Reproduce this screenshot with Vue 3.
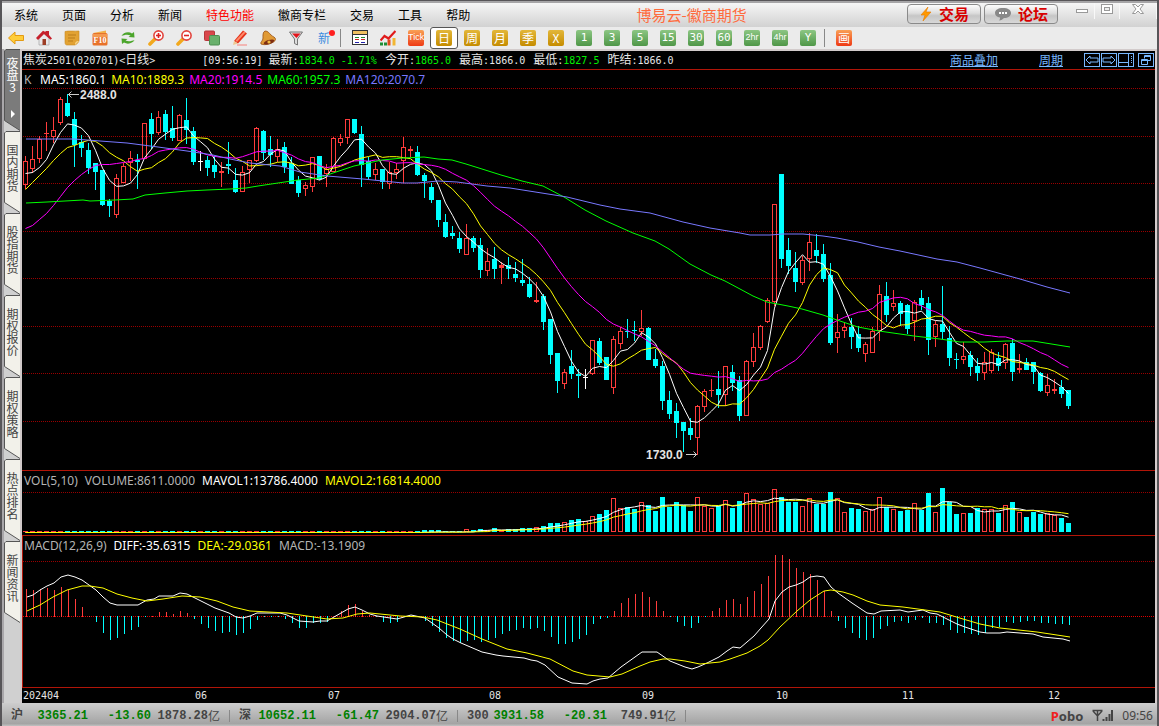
<script setup>
const menu = ['系统', '页面', '分析', '新闻', '特色功能', '徽商专栏', '交易', '工具', '帮助']
const periods = [
  { t: '日', c: 'gold' }, { t: '周', c: 'gold' }, { t: '月', c: 'gold' }, { t: '季', c: 'gold' }, { t: 'X', c: 'gold' },
  { t: '1', c: 'green' }, { t: '3', c: 'green' }, { t: '5', c: 'green' }, { t: '15', c: 'green' }, { t: '30', c: 'green' },
  { t: '60', c: 'green' }, { t: '2hr', c: 'green' }, { t: '4hr', c: 'green' }, { t: 'Y', c: 'green' },
]
const tabs = ['夜盘3', '国内期货', '股指期货', '期权报价', '期权策略', '热点排名', '新闻资讯']
const quotes = [
  { k: '今开', v: '1865.0', up: true }, { k: '最高', v: '1866.0' },
  { k: '最低', v: '1827.5', up: true }, { k: '昨结', v: '1866.0' },
]
const indices = [
  { n: '沪', p: '3365.21', d: '-13.60', a: '1878.28' },
  { n: '深', p: '10652.11', d: '-61.47', a: '2904.07' },
  { n: '300', p: '3931.58', d: '-20.31', a: '749.91' },
]
const months = [
  { x: 1, t: '202404' }, { x: 173, t: '06' }, { x: 306, t: '07' }, { x: 467, t: '08' },
  { x: 620, t: '09' }, { x: 754, t: '10' }, { x: 880, t: '11' }, { x: 1026, t: '12' },
]

// Each bar: direction (u = up, d = down, f = flat), body top, body bottom, high, low
const raw = `u161,185,156,189 u159,169,146,173 u139,159,136,163 u133,134,122,151 u130,137,117,143 u99,123,97,125
d103,116,94,117 d119,145,112,167 d142,148,135,157 d150,168,143,174 d163,172,163,190 d170,205,170,206 d201,206,199,217
u178,215,174,218 u166,183,163,183 u158,163,151,181 d160,162,154,189 u123,159,123,159 d119,134,113,149 u117,133,111,135
d114,132,110,140 d128,138,106,141 u115,141,114,141 d120,130,98,144 d131,162,127,165 f161,162,151,171 d160,168,156,176
d165,172,156,178 u171,173,162,187 d164,166,142,174 d180,192,168,193 u172,192,166,192 u160,170,160,183 u128,161,127,162
d131,153,130,160 d149,155,136,167 u149,157,139,162 d147,167,142,173 d163,184,157,184 d180,193,176,197 u185,189,182,196
u157,187,157,192 d156,179,156,180 u169,174,164,187 u138,172,137,172 u138,143,134,146 u119,138,119,144 d119,133,119,134
d134,165,126,187 d161,177,157,179 u169,175,163,180 d169,182,169,189 u172,184,162,189 u169,173,163,179 u147,161,137,183
u149,151,146,157 d152,175,146,176 d175,181,173,198 d187,200,183,203 d200,220,200,227 d222,237,214,238 d233,236,226,239
d238,249,232,253 u238,255,224,255 d238,248,236,252 d245,270,238,278 u261,271,248,276 d259,269,247,279 u265,268,262,284
d265,269,257,279 d274,278,262,282 d280,283,259,286 d284,297,277,298 u300,302,282,303 d296,322,294,330 d319,355,319,364
d353,381,353,393 u372,384,369,389 d366,374,350,379 d374,376,369,398 f377,378,369,389 u340,374,340,375 d341,363,338,365
d357,380,357,380 u339,388,336,394 u331,344,327,349 d331,332,319,338 d330,331,321,341 u328,332,310,336 d328,360,327,360
d359,366,349,368 d366,401,361,410 d400,414,391,419 d411,423,403,438 d422,431,422,452 d428,435,418,440 u406,438,405,455
u391,407,389,412 u390,391,379,397 d389,395,371,408 u366,395,366,406 d372,383,365,391 d380,416,376,421 u361,416,360,416
u347,362,333,367 u326,348,325,350 u300,322,298,323 u204,302,204,306 d174,259,174,268 d250,266,238,274 d268,282,252,292
u260,283,256,285 u242,259,233,271 d250,256,234,263 d254,279,244,282 d275,343,263,345 u332,338,314,353 u327,331,322,338
d327,337,318,349 d334,348,326,352 u344,354,342,362 u331,353,327,353 u294,331,285,341 d296,315,282,322 u303,307,290,311
d303,314,301,326 d305,329,304,334 u302,321,300,341 d298,305,290,310 d303,340,297,355 u324,337,321,347 d324,332,286,339
d338,358,326,366 d359,360,353,369 u356,360,342,364 d355,367,351,376 d366,373,358,381 u362,373,352,380 u352,371,349,373
d358,366,352,371 u344,363,343,369 d343,372,339,381 u368,370,354,373 d362,370,358,370 d362,372,362,384 d373,391,372,392
u385,393,374,396 u389,391,379,394 d387,394,380,398 d390,406,390,409`
const palette = { u: '#ff3c3c', d: '#00ffff', f: '#ffffff' }
const candles = raw.split(/\s+/).map((s, i) => {
  const [top, bottom, high, low] = s.slice(1).split(',').map(Number)
  const kind = s[0]
  return {
    x: 23 + 7 * i, top, bottom, high, low, kind,
    color: palette[kind],
    hollow: kind === 'u' && bottom - top > 3,
    close: kind === 'd' ? bottom : top,
  }
})

const average = (values, n, lead) => values.map((_, i) => {
  if (i < n - 1) return lead[i]
  return values.slice(i - n + 1, i + 1).reduce((a, b) => a + b, 0) / n
})
const toPoints = (values) => values.map((v, i) => `${25.5 + 7 * i},${(v + 0.5).toFixed(1)}`).join(' ')
const closes = candles.map((c) => c.close)
const ma5 = toPoints(average(closes, 5, [173, 172, 167, 159]))
const ma10 = toPoints(average(closes, 10, [189, 182, 175, 168, 160, 153, 147, 145, 142]))
const ma20 = toPoints(average(closes, 20, [228, 225, 219, 213, 205, 196, 187, 180, 174, 169, 165, 164, 164, 163, 162, 161, 159, 158, 155]))
const ma60 = '26,203 47,202 83,200 90,201 115,200 133,199 145,195 165,193 187,191 207,190 230,189 246,188 258,186 278,183 298,180 319,178 333,173 354,166 368,163 382,160 403,158 424,157 438,159 452,160 466,164 482,169 501,175 522,181 543,186 564,197 585,210 606,221 633,233 655,241 669,249 690,264 711,275 725,281 740,289 753,296 767,302 788,306 802,309 823,315 837,320 858,327 879,331 914,336 940,339 960,342 984,342 1007,341 1033,341 1070,347'
const ma120 = '26,139 47,139 74,139 100,141 127,143 158,147 187,151 213,155 230,159 250,163 280,166 300,172 327,176 363,179 403,183 417,183 438,181 457,182 487,186 510,188 567,197 600,205 620,209 650,213 683,222 710,228 740,233 750,235 770,235 783,234 803,234 823,236 837,238 858,242 879,247 900,251 937,259 957,262 980,268 1020,279 1047,287 1070,293'

// Volume heights in thirds of a pixel
const volumes = [
  ...Array(57).fill(3), 6, 6, 6, 3, 3, 4, 8, 6, 9, 5, 12, 6, 8, 9, 11, 12, 14, 18,
  27, 27, 30, 36, 39, 34, 47, 54, 66, 102, 72, 75, 69, 89, 81, 63, 105, 75, 90, 81, 63, 104, 78, 72, 78, 95, 72, 93, 116, 99, 84, 87, 128,
  105, 90, 90, 78, 101, 84, 85, 120, 101, 59, 72, 69, 63, 68, 104, 76, 68, 63, 66, 86, 66, 117, 59, 132, 90, 54, 57, 57, 72, 68, 68, 57, 80, 90, 59, 45, 60, 54, 56, 50, 42, 27,
].map((v) => v / 3)
const volBars = volumes.map((h, i) => ({
  x: 23 + 7 * i, y: Math.round(532 - h), h: Math.max(1, Math.round(h)),
  color: candles[i].kind === 'd' ? '#00ffff' : '#ff3c3c',
  hollow: candles[i].kind !== 'd' && h > 2,
}))
const volY = (n) => toPoints(average(volumes, n, Array(n).fill(1)).map((v) => Math.min(532 - v + (v < 2 ? 1 : 0), 532)))
const mavol1 = volY(5)
const mavol2 = volY(10)

// Histogram lengths in thirds of a pixel, positive above zero
const hist = [
  85, 82, 85, 88, 82, 91, 82, 55, 31, 1, -18, -50, -71, -65, -53, -41, -32, -4, 4, 16, 16, 10, 19, 13, -8, -23, -35, -44, -50, -47, -56, -50, -38, -11, -4, -4, -2, -8, -20, -35, -35, -20, -20, -17, 4, 19, 37, 40, 19, 7, -4, -17, -20, -17, -3, 3, -3, -14, -29, -47,
  -65, -74, -80, -74, -71, -77, -71, -65, -53, -44, -41, -35, -38, -35, -44, -62, -83, -83, -77, -68, -56, -23, -8, -5, 19, 43, 58, 70, 76, 61, 49, 19, -2, -17, -29, -35, -20, -1, 19, 28, 52, 55, 40, 61, 79, 100, 124, 187,
  187, 175, 148, 136, 130, 112, 79, 19, -14, -35, -50, -65, -71, -65, -38, -29, -17, -14, -20, -11, -5, -20, -20, -26, -41, -50, -50, -53, -56, -50, -35, -32, -17, -20, -17, -14, -14, -20, -20, -23, -23, -26,
].map((v, i) => {
  const h = Math.max(1, Math.round(Math.abs(v) / 3))
  return { x: 26 + 7 * i, y: v > 0 ? 617 - h : 616, h, color: v > 0 ? '#ff3c3c' : '#00ffff' }
})
const diff = '27,597 33,595 40,590 47,586 54,583 61,577 68,575 75,577 82,580 89,585 96,590 103,597 110,603 117,605 138,605 147,600 154,599 159,596 173,596 180,593 187,594 201,601 215,608 229,613 236,617 243,618 250,616 257,613 280,613 287,615 299,621 313,622 320,621 327,621 334,617 341,613 348,609 355,607 362,610 370,614 377,616 397,619 411,615 425,618 432,623 439,628 447,635 453,639 461,643 468,646 482,652 496,655 503,656 524,658 531,660 537,661 545,665 558,677 565,680 572,683 587,684 593,681 600,679 608,678 621,667 635,657 642,652 657,652 670,661 685,667 692,669 698,667 707,663 719,657 727,651 733,647 740,648 754,636 761,628 769,619 775,601 782,592 789,587 796,585 803,582 810,577 817,576 824,577 831,587 838,593 852,603 867,613 874,614 881,611 900,610 908,612 923,610 930,613 937,614 943,617 957,624 965,627 980,632 987,633 1000,633 1007,632 1033,634 1043,637 1063,639 1070,641'
const dea = '27,611 40,605 53,597 67,590 82,586 90,586 103,588 117,594 132,598 147,601 163,599 182,596 200,597 217,601 233,607 250,611 287,613 307,616 327,619 343,618 357,614 370,613 400,616 423,617 437,620 460,629 482,639 507,649 527,653 550,659 573,671 587,675 610,677 622,674 640,666 650,662 663,659 670,659 685,661 700,664 720,662 730,659 747,653 760,646 768,640 780,627 797,611 810,600 824,591 831,590 843,592 853,595 867,601 880,605 903,607 940,612 963,619 980,624 1000,628 1037,632 1070,637'
const priceGrid = [18, 66, 113, 161, 208, 256, 303, 351]
</script>

<template>
  <div class="app">
    <header class="titlebar">
      <nav class="menu">
        <button v-for="m in menu" :key="m" class="menu-item" :class="{ hot: m === '特色功能' }">{{ m }}</button>
      </nav>
      <h1 class="title">博易云-徽商期货</h1>
      <div class="actions">
        <button class="pill">
          <svg width="14" height="16" viewBox="0 0 14 16"><path d="M9 1 2 9h4L4 15l8-9H7z" fill="#f90" stroke="#e67a00" stroke-width=".6" /></svg>
          <span>交易</span>
        </button>
        <button class="pill">
          <svg width="18" height="16" viewBox="0 0 18 16"><path d="M9 2c5 0 8 2 8 5s-3 5-7 5c-1 1-3 2.500-5 2.500 1-1 1-2 1-3C3 11 1 9.500 1 7c0-3 3-5 8-5z" fill="#888" /><path d="M5 7h2M8 7h2M11 7h2" stroke="#fff" stroke-width="2" /></svg>
          <span>论坛</span>
        </button>
      </div>
      <div class="winctl">
        <button aria-label="最小化"><svg width="14" height="12" viewBox="0 0 14 12"><rect x="1.500" y="6.500" width="11" height="3" fill="#fff" stroke="#999" /></svg></button>
        <button aria-label="最大化"><svg width="14" height="12" viewBox="0 0 14 12"><rect x="1.500" y="1.500" width="11" height="9" fill="#fff" stroke="#999" /><rect x="4.500" y="4.500" width="5" height="3" fill="#eee" stroke="#999" /></svg></button>
        <button class="close" aria-label="关闭"><svg width="14" height="12" viewBox="0 0 14 12"><path d="M1.500 1.500h3L7 4l2.500-2.500h3L9 6l3.500 4.500h-3L7 8l-2.500 2.500h-3L5 6z" fill="#fff" stroke="#999" /></svg></button>
      </div>
    </header>

    <div class="toolbar">
      <button aria-label="后退"><svg width="16" height="16" viewBox="0 0 16 16"><path d="M.5 8 7 2v3.500h8.500v5H7V14z" fill="#ffcd38" stroke="#e39a12" /></svg></button>
      <button aria-label="首页"><svg width="16" height="16" viewBox="0 0 16 16"><path d="M3 8v7h10V8L8 3.500z" fill="#e9e9ea" stroke="#999" stroke-width=".6" /><path d="M0 8 7 .8 9.500 2V1H13v4l3 3.500-1.500 1.200L8 4 2 10z" fill="#c6202b" /><rect x="6.500" y="9" width="3.500" height="6" fill="#9d3d25" /></svg></button>
      <button aria-label="公告"><svg width="16" height="16" viewBox="0 0 16 16"><path d="M1 1.500C5 .5 10 1.500 15 1v10c-1 2-2 3-4 4H3c-1.500 0-2-1-2-3z" fill="#e2a232" stroke="#c98a1e" stroke-width=".6" /><path d="M11 15c0-3 1-4 4-4" fill="#f7d68c" /><path d="M4 5h8M4 8h7M4 11h5" stroke="#b97c1a" stroke-width="1" /></svg></button>
      <button aria-label="F10"><svg width="17" height="16" viewBox="0 0 17 16"><path d="M1 3l13-2.500V3z" fill="#f3b04a" /><rect x=".5" y="3" width="15" height="12.500" rx="1.500" fill="#e8722a" /><path d="M1 4h14v3H1z" fill="#f49a50" /><text x="8" y="12.500" class="f10" text-anchor="middle">F10</text></svg></button>
      <button aria-label="刷新"><svg width="16" height="16" viewBox="0 0 16 16"><path d="M1.500 6C3 3 8 1 12 3.500L14 2l.5 5.500-6-.5L10.500 5.500C7.500 4 4 5 1.500 6z" fill="#4ba52b" /><path d="M14.500 10C13 13 8 15 4 12.500L2 14l-.5-5.500 6 .5L5.500 10.500c3 1.500 6.500.5 9-.5z" fill="#4ba52b" /></svg></button>
      <button v-for="z in ['放大', '缩小']" :key="z" :aria-label="z"><svg width="16" height="16" viewBox="0 0 16 16"><path d="M7 9 2 14" stroke="#f2a81d" stroke-width="3.600" stroke-linecap="round" /><circle cx="10.500" cy="5.500" r="4.600" fill="#fff" stroke="#e2433c" stroke-width="1.600" /><path d="M8 5.500h5" stroke="#dd2222" stroke-width="1.600" /><path v-if="z === '放大'" d="M10.500 3v5" stroke="#dd2222" stroke-width="1.600" /></svg></button>
      <button aria-label="叠加"><svg width="16" height="16" viewBox="0 0 16 16"><rect x=".5" y="1" width="10" height="9.500" rx="1" fill="#d9474b" stroke="#b5383c" /><rect x="5.500" y="5.500" width="10" height="9.500" rx="1" fill="#69b06c" stroke="#4c8f50" /></svg></button>
      <button aria-label="画线"><svg width="16" height="16" viewBox="0 0 16 16"><path d="M2 11 11 .5l4 3L6 13.500z" fill="#e5331b" /><path d="M3.500 10.500 12 1.500l1.500 1L5 12z" fill="#ff8a6a" /><path d="m2 11 4 2.500L1 15z" fill="#f0c890" /><path d="M5 15h10" stroke="#f3a5a0" stroke-width="1.500" /></svg></button>
      <button aria-label="预警"><svg width="16" height="16" viewBox="0 0 16 16"><path d="M5 1C8 1 9 3 11 5c2 2 4.500 2 4.500 4.500C15 13 5 16 1 14c-1-2 2-3 2-6 0-2-.5-6 2-7z" fill="#e09a36" stroke="#995214" stroke-width=".8" /><ellipse cx="9" cy="12" rx="5.500" ry="2" transform="rotate(-18 9 12)" fill="#7e2d13" /><circle cx="9" cy="12" r="1.600" fill="#f0bc41" /></svg></button>
      <button aria-label="过滤"><svg width="16" height="16" viewBox="0 0 16 16"><path d="M1.500 2h13L9.500 9v6l-3-1.500V9z" fill="#ddd" stroke="#777" /><path d="M4 3.500h8.500L8.500 8z" fill="#e2141c" /></svg></button>
      <button class="new"><span>新</span><i></i></button>
      <span class="sep"></span>
      <button aria-label="报价"><svg width="16" height="16" viewBox="0 0 16 16"><rect x=".5" y=".5" width="15" height="14" fill="#fff" stroke="#333" /><path d="M1 2.500h14" stroke="#f0c060" stroke-width="3" /><path d="M0 4.500h16" stroke="#333" /><path d="M3 7.500h4M9 7.500h4" stroke="#2a8b2a" /><path d="M3 9.500h4M9 9.500h4" stroke="#c22" /><path d="M3 12.500h4M9 12.500h4" stroke="#22a" /></svg></button>
      <button aria-label="分时"><svg width="16" height="16" viewBox="0 0 16 16"><path d="M1.500 15.500v-3M5.500 15.500v-3" stroke="#1f8f35" stroke-width="3" /><path d="M9 15.500V9.500" stroke="#e14a1a" stroke-width="3" /><path d="M14 15.500V8" stroke="#f2b632" stroke-width="3" /><path d="m.5 10.500 4-4.500 4 2.500L15.500 1" fill="none" stroke="#e01b1b" stroke-width="2.200" /></svg></button>
      <button><span class="chip orange narrow">Tick</span></button>
      <button v-for="(p, i) in periods" :key="p.t" :class="{ active: i === 0 }"><span class="chip" :class="[p.c, { narrow: p.t.length > 2 }]">{{ p.t }}</span></button>
      <span class="sep"></span>
      <button><span class="chip orange">画</span></button>
    </div>

    <div class="body">
      <nav class="rail">
        <button v-for="(t, i) in tabs" :key="t" class="tab" :class="{ on: i === 0 }">
          <svg class="tab-shape" width="16" height="82" viewBox="0 0 16 82"><path d="M17 .5H2L.5 2v69.500L16 81.500h1z" :fill="i === 0 ? '#7b7b7b' : '#f2f1ea'" stroke="#555" /><path v-if="i === 0" d="m7 61 4 4-4 4z" fill="#fff" /></svg>
          <span class="tab-text">{{ t }}</span>
        </button>
      </nav>

      <main class="chart">
        <div class="quote">
          <span>焦炭<tt>2501(020701)&lt;</tt>日线<tt>&gt;</tt></span>
          <span class="time"><tt>[09:56:19]</tt></span>
          <span>最新<tt>:<em>1834.0 -1.71%</em></tt></span>
          <span v-for="q in quotes" :key="q.k">{{ q.k }}<tt>:<em v-if="q.up">{{ q.v }}</em><template v-else>{{ q.v }}</template></tt></span>
          <a href="#" class="first-link">商品叠加</a>
          <a href="#" class="second-link">周期</a>
          <span class="boxes">
            <button aria-label="左移"><svg width="16" height="14" viewBox="0 0 16 14"><path d="M2 7 6 3v2h8v4H6v2z" /></svg></button>
            <button aria-label="右移"><svg width="16" height="14" viewBox="0 0 16 14"><path d="m14 7-4-4v2H2v4h8v2z" /></svg></button>
            <button aria-label="侧栏"><svg width="16" height="14" viewBox="0 0 16 14"><path d="M1 9.500h9.500M10.500 1v12M13 3.500h1M13 5.500h1M13 7.500h1M13 9.500h1" /></svg></button>
            <button class="gap" aria-label="还原"><svg width="16" height="14" viewBox="0 0 16 14"><path d="M6.500 5.500v-3h6v5h-3M6.500 3.500h6M3.500 6.500h6v5h-6zM3.500 7.500h6" /></svg></button>
          </span>
        </div>

        <section class="pane price">
          <svg class="plot" aria-hidden="true">
            <line v-for="y in priceGrid" :key="y" class="grid" x1="1" x2="100%" :y1="y + 0.5" :y2="y + 0.5" />
            <g transform="translate(-22 -70)">
              <g v-for="c in candles" :key="c.x" class="crisp">
                <template v-if="c.hollow">
                  <rect :x="c.x + 2" :y="c.high" width="1" :height="c.top - c.high" :fill="c.color" />
                  <rect :x="c.x + 2" :y="c.bottom" width="1" :height="c.low - c.bottom" :fill="c.color" />
                  <rect :x="c.x + 0.5" :y="c.top + 0.5" width="4" :height="c.bottom - c.top - 1" fill="none" :stroke="c.color" />
                </template>
                <template v-else>
                  <rect :x="c.x + 2" :y="c.high" width="1" :height="c.low - c.high" :fill="c.color" />
                  <rect :x="c.x" :y="c.top" width="5" :height="c.bottom - c.top" :fill="c.color" />
                </template>
              </g>
              <polyline :points="ma5" stroke="#ffffff" />
              <polyline :points="ma10" stroke="#ffff00" />
              <polyline :points="ma20" stroke="#ff00ff" />
              <polyline :points="ma60" stroke="#00ff00" />
              <polyline :points="ma120" stroke="#7878ff" />
              <path class="arrow" d="M68 94.500h11M71.500 91.500l-3 3 3 3" />
              <text class="mark" x="80" y="99">2488.0</text>
              <path class="arrow" d="M686 454.500h11M693.500 451.500l3 3-3 3" />
              <text class="mark" x="646" y="459">1730.0</text>
            </g>
          </svg>
          <div class="legend tight">
            <span class="silver k">K</span><span class="white">MA5:1860.1</span><span class="yellow">MA10:1889.3</span>
            <span class="magenta">MA20:1914.5</span><span class="lime">MA60:1957.3</span><span class="blue">MA120:2070.7</span>
          </div>
        </section>

        <section class="pane volume">
          <svg class="plot" aria-hidden="true">
            <line class="grid" x1="1" x2="100%" y1="21.500" y2="21.500" />
            <g transform="translate(-22 -471)">
              <g v-for="b in volBars" :key="b.x" class="crisp">
                <rect v-if="b.hollow" :x="b.x + 0.5" :y="b.y + 0.5" width="4" :height="b.h - 1" fill="none" :stroke="b.color" />
                <rect v-else :x="b.x" :y="b.y" width="5" :height="b.h" :fill="b.color" />
              </g>
              <polyline :points="mavol1" stroke="#ffffff" />
              <polyline :points="mavol2" stroke="#ffff00" />
            </g>
          </svg>
          <div class="legend">
            <span class="silver">VOL(5,10)</span><span class="silver">VOLUME:8611.0000</span><span class="white">MAVOL1:13786.4000</span><span class="yellow">MAVOL2:16814.4000</span>
          </div>
        </section>

        <section class="pane macd">
          <svg class="plot" aria-hidden="true">
            <line class="grid" x1="1" x2="100%" y1="25.500" y2="25.500" />
            <line class="grid zero" x1="1" x2="100%" y1="80.500" y2="80.500" />
            <g transform="translate(-22 -536)">
              <rect v-for="h in hist" :key="h.x" class="crisp" :x="h.x" :y="h.y" width="1" :height="h.h" :fill="h.color" />
              <polyline :points="diff" stroke="#ffffff" />
              <polyline :points="dea" stroke="#ffff00" />
            </g>
          </svg>
          <div class="legend">
            <span class="silver">MACD(12,26,9)</span><span class="white">DIFF:-35.6315</span><span class="yellow">DEA:-29.0361</span><span class="silver">MACD:-13.1909</span>
          </div>
        </section>

        <svg class="axis"><text v-for="m in months" :key="m.t" :x="m.x" y="11">{{ m.t }}</text></svg>
      </main>
    </div>

    <footer class="status">
      <div v-for="s in indices" :key="s.n" class="index">
        <span class="name">{{ s.n }}</span><span class="num">{{ s.p }}</span><span class="num">{{ s.d }}</span><span class="amount">{{ s.a }}<i>亿</i></span>
      </div>
      <div class="right">
        <strong><em>P</em>obo</strong>
        <svg width="21" height="14" viewBox="0 0 21 14"><path d="M.5 1.500h10M1 2l4.500 5L10 2M5.500 1v11" fill="none" stroke="#444" stroke-width="1.500" /><path d="M11.500 12v-2M14.500 12V8M17.500 12V5M20 12V1" stroke="#444" stroke-width="2" /></svg>
        <span class="clock">09:56</span>
      </div>
    </footer>
  </div>
</template>

<style>
body { background: #c8c8c8; }
</style>

<style scoped>
.app { display: flex; flex-direction: column; min-height: 100vh; box-sizing: border-box; border: 2px solid #575558; border-top-width: 1px; border-bottom-width: 0; font: 12px/14px "Noto Sans CJK SC", sans-serif; background: #c8c8c8; color: #000; }
button { border: 0; padding: 0; margin: 0; background: none; font: inherit; color: inherit; }
svg { display: block; }
.titlebar { display: flex; height: 26px; flex: none; border-top: 2px solid #a6a5a7; box-sizing: border-box; background: linear-gradient(#f6f6f6, #d2d2d2); }
.menu { display: flex; }
.menu-item { padding: 0 12px; }
.menu-item.hot { color: #f00; }
.title { flex: 1; margin: 0; padding-right: 6px; text-align: center; font-size: 15px; line-height: 24px; font-weight: 400; color: #ff6b3d; }
.actions { display: flex; gap: 3px; padding-top: 1px; }
.pill { display: flex; align-items: center; justify-content: center; gap: 6px; box-sizing: border-box; width: 74px; height: 20px; border: 1px solid #8a8a8a; border-radius: 4px; background: linear-gradient(#fdfdfd, #ddd 45%, #c6c6c6 60%, #d8d8d8); color: #d80000; font-size: 15px; line-height: 18px; font-weight: 700; }
.pill span { line-height: 16px; }
.winctl { display: flex; align-items: flex-start; margin-left: 12px; }
.winctl button { display: flex; justify-content: center; width: 25px; height: 16px; border-right: 1px solid #f8f8f8; }
.winctl .close { width: 37px; }
.toolbar { display: flex; height: 22px; flex: none; background: #ebebeb; border-bottom: 2px solid #d2cbcb; }
.toolbar button { position: relative; display: flex; align-items: center; justify-content: center; box-sizing: border-box; width: 28px; height: 22px; }
.toolbar .active { border: 1px solid #555; border-radius: 3px; background: #fff; }
.sep { width: 1px; height: 18px; margin: 2px 5px 2px 2px; background: #888; }
.toolbar .new { font-size: 12px; color: #3c8be0; }
.new i { position: absolute; right: 3px; top: 3px; width: 6px; height: 6px; border-radius: 3px; background: #ff2020; }
.f10 { font: bold 8px "Liberation Serif", serif; fill: #fff; }
.chip { width: 16px; height: 16px; border-radius: 2px; overflow: hidden; text-align: center; font-size: 12px; line-height: 15px; color: #fff; }
.gold { background: linear-gradient(#e3b73a, #c58c00); }
.green { background: linear-gradient(#8cc683, #4f9748); font-family: "DejaVu Sans Mono", monospace; font-size: 11px; }
.orange { background: linear-gradient(#f9a055, #ee3a14); }
.chip.narrow { font: 9px/15px "Liberation Sans", sans-serif; }
.body { display: flex; flex: 1; }
.rail { display: flex; flex-direction: column; width: 16px; flex: none; margin-top: -2px; padding-left: 2px; border-right: 2px solid #d0c9c9; background: linear-gradient(90deg, #a9a7aa 2px, #d0d0d0 2px); }
.tab { position: relative; height: 82px; width: 16px; color: #444; }
.tab.on { color: #fff; }
.tab-shape { position: absolute; left: 0; top: 0; }
.tab-text { position: absolute; left: 2px; top: 13px; writing-mode: vertical-rl; text-orientation: upright; font-size: 12px; line-height: 12px; }
.tab.on .tab-text { top: 8px; }
.chart { display: flex; flex: 1; min-width: 0; flex-direction: column; border-right: 2px solid #d5cccc; background: #000; color: #e6e6e6; }
.quote { display: flex; align-items: center; height: 18px; flex: none; gap: 8px; padding-left: 1px; border-bottom: 1px solid #b11508; white-space: pre; line-height: 16px; }
.quote tt { font: 10px/16px "DejaVu Sans Mono", monospace; }
.quote em { font-style: normal; color: #00f000; }
.quote .time { margin: 0 -2px 0 39px; }
.quote a { color: #78b8ff; }
.first-link { margin-left: auto; }
.second-link { margin-left: 33px; }
.boxes { display: flex; gap: 1px; margin-left: 13px; }
.boxes button { box-sizing: border-box; width: 16px; height: 14px; overflow: hidden; outline: 1px solid #78b8ff; outline-offset: -1px; }
.boxes .gap { margin-left: 3px; margin-right: 1px; }
.boxes path { fill: none; stroke: #78b8ff; }
.pane { position: relative; border-bottom: 1px solid #b11508; overflow: hidden; flex: none; }
.price { flex: 1 0 400px; }
.volume { height: 64px; }
.macd { height: 151px; box-shadow: inset 1px 0 #b11508; }
.plot { position: absolute; left: 0; top: 0; width: 100%; height: 100%; }
.grid { stroke: #900; stroke-dasharray: 1 1; shape-rendering: crispEdges; }
.zero { stroke: #d00; }
.crisp { shape-rendering: crispEdges; }
polyline { fill: none; stroke-width: 1; }
.arrow { fill: none; stroke: #ccc; }
.mark { font: bold 12px "Liberation Sans", sans-serif; fill: #e4e4e4; }
.legend { position: relative; display: flex; gap: 7px; padding: 2px 0 0 2px; font: 12px/16px "Noto Sans", sans-serif; white-space: nowrap; }
.legend.tight { gap: 5px; }
.k { width: 11px; }
.silver { color: #b4b4b4; }
.white { color: #fff; }
.yellow { color: #ff0; }
.magenta { color: #f0f; }
.lime { color: #0f0; }
.blue { color: #7878ff; }
.axis { width: 100%; height: 15px; flex: none; }
.axis text { font: 10px "DejaVu Sans Mono", monospace; fill: #e6e6e6; }
.status { display: flex; align-items: center; box-sizing: border-box; height: 23px; padding-top: 2px; flex: none; background: linear-gradient(#cdcdcd, #a4a4a4 90%, #c2c2c2); color: #444; }
.index { display: grid; grid-template-columns: 20px 57px 63px 69px; align-items: center; box-sizing: border-box; width: 228px; padding-left: 9px; background: linear-gradient(#888, #888) right center / 1px 12px no-repeat; font: bold 12px/16px "Liberation Mono", monospace; }
.index span { display: flex; justify-content: flex-end; }
.index .name { justify-content: flex-start; font-family: "Liberation Mono", "Noto Sans CJK SC", monospace; }
.index .num { color: #008000; }
.index i { font: 12px/16px "Noto Sans CJK SC", sans-serif; }
.right { display: flex; align-items: center; gap: 9px; margin-left: auto; padding-right: 4px; }
.right strong { font: bold 13px/16px "Noto Sans", sans-serif; }
.right em { font-style: normal; color: #f02020; }
.clock { font: 12px/16px "Noto Sans", sans-serif; }
</style>
